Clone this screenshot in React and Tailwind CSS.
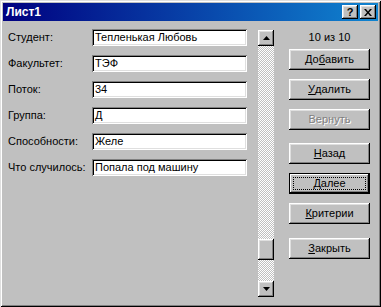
import React from "react";

const raised =
  "shadow-[inset_-1px_-1px_#000,inset_1px_1px_#fff,inset_-2px_-2px_#808080,inset_2px_2px_#dfdfdf]";
const sunken =
  "shadow-[inset_1px_1px_#808080,inset_-1px_-1px_#fff,inset_2px_2px_#000,inset_-2px_-2px_#dfdfdf]";

function Field({ label, value }) {
  return (
    <div className="flex items-center h-[17px]">
      <div className="w-[84px] text-[11px] leading-[13px] text-black">{label}</div>
      <div className={`w-[155px] h-[17px] bg-white ${sunken} flex items-center pl-[3px] text-[11px] leading-[13px] text-black whitespace-nowrap`}>
        {value}
      </div>
    </div>
  );
}

function Btn({ children, disabled, def }) {
  if (def) {
    return (
      <div className="relative w-[81px] h-[21px] bg-[#c0c0c0] border border-black shadow-[inset_-1px_-1px_#000,inset_1px_1px_#fff,inset_-2px_-2px_#808080] flex items-center justify-center text-[11px] leading-[13px] text-black">
        <div className="absolute left-[3px] right-[3px] top-[3px] bottom-[3px] border border-dotted border-black" />
        <span className="relative">{children}</span>
      </div>
    );
  }
  return (
    <div
      className={`w-[81px] h-[21px] bg-[#c0c0c0] ${raised} flex items-center justify-center text-[11px] leading-[13px] ${
        disabled ? "text-[#808080] [text-shadow:1px_1px_0_#fff]" : "text-black"
      }`}
    >
      {children}
    </div>
  );
}

function ScrollBtn({ up }) {
  return (
    <div className={`w-[16px] h-[16px] bg-[#c0c0c0] ${raised} flex items-center justify-center`}>
      <svg width="7" height="4" viewBox="0 0 7 4">
        {up ? (
          <polygon points="3.5,0 7,4 0,4" fill="#000" />
        ) : (
          <polygon points="0,0 7,0 3.5,4" fill="#000" />
        )}
      </svg>
    </div>
  );
}

const track =
  "bg-[repeating-conic-gradient(#c0c0c0_0_25%,#fff_0_50%)] bg-[length:2px_2px]";

export default function App() {
  return (
    <div
      className="w-[381px] h-[307px] bg-[#c0c0c0] p-[3px] shadow-[inset_1px_1px_#dfdfdf,inset_-1px_-1px_#000,inset_2px_2px_#fff,inset_-2px_-2px_#808080] flex flex-col"
      style={{ fontFamily: '"Liberation Sans", Arial, sans-serif' }}
    >
      <div className="h-[18px] bg-[linear-gradient(to_right,#000080,#1084d0)] flex items-center pl-[3px] pr-[2px]">
        <div className="flex-1 text-white font-bold text-[12px] leading-[14px]">Лист1</div>
        <div className={`w-[16px] h-[14px] bg-[#c0c0c0] ${raised} flex items-center justify-center text-[11px] font-bold leading-[11px] text-black`}>
          ?
        </div>
        <div className={`ml-[2px] w-[16px] h-[14px] bg-[#c0c0c0] ${raised} flex items-center justify-center`}>
          <svg width="8" height="7" viewBox="0 0 8 7">
            <path d="M0 0h2l2 2.5L6 0h2L5 3.5 8 7H6L4 4.5 2 7H0l3-3.5z" fill="#000" />
          </svg>
        </div>
      </div>
      <div className="flex pt-[8px] pl-[5px]">
        <div className="flex flex-col gap-[9px] w-[239px]">
          <Field label="Студент:" value="Тепленькая Любовь" />
          <Field label="Факультет:" value="ТЭФ" />
          <Field label="Поток:" value="34" />
          <Field label="Группа:" value="Д" />
          <Field label="Способности:" value="Желе" />
          <Field label="Что случилось:" value="Попала под машину" />
        </div>
        <div className="ml-[11px] mt-[1px] w-[16px] h-[267px] flex flex-col">
          <ScrollBtn up />
          <div className={`flex-1 ${track}`} />
          <div className={`w-[16px] h-[21px] bg-[#c0c0c0] ${raised}`} />
          <div className={`h-[21px] ${track}`} />
          <ScrollBtn />
        </div>
        <div className="ml-[15px] w-[81px] flex flex-col pt-[2px]">
          <div className="text-center text-[11px] leading-[13px] text-black">10 из 10</div>
          <div className="mt-[5px] flex flex-col gap-[9px]">
            <Btn>
              До<u>б</u>авить
            </Btn>
            <Btn>
              <u>У</u>далить
            </Btn>
            <Btn disabled>Вернуть</Btn>
          </div>
          <div className="mt-[13px] flex flex-col gap-[9px]">
            <Btn>
              <u>Н</u>азад
            </Btn>
            <Btn def>
              <u>Д</u>алее
            </Btn>
            <Btn>
              <u>К</u>ритерии
            </Btn>
          </div>
          <div className="mt-[14px]">
            <Btn>
              <u>З</u>акрыть
            </Btn>
          </div>
        </div>
      </div>
    </div>
  );
}
